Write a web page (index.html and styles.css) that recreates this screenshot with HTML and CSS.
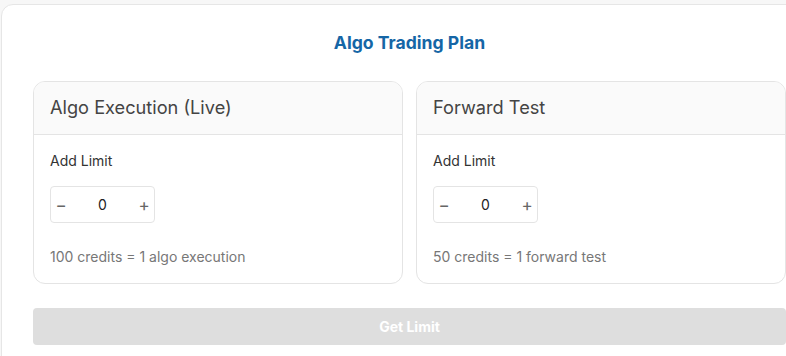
FILE: index.html
```html
<!DOCTYPE html>
<html>
<head>
<meta charset="utf-8">
<link rel="stylesheet" href="styles.css">
</head>
<body>
<div class="page">
  <div class="panel">
    <h2 class="title">Algo Trading Plan</h2>
    <div class="cards">
      <div class="card">
        <div class="card-head">Algo Execution (Live)</div>
        <div class="card-body">
          <div class="label">Add Limit</div>
          <div class="stepper">
            <span class="step">&minus;</span>
            <span class="val">0</span>
            <span class="step">+</span>
          </div>
          <div class="note">100 credits = 1 algo execution</div>
        </div>
      </div>
      <div class="card">
        <div class="card-head">Forward Test</div>
        <div class="card-body">
          <div class="label">Add Limit</div>
          <div class="stepper">
            <span class="step">&minus;</span>
            <span class="val">0</span>
            <span class="step">+</span>
          </div>
          <div class="note">50 credits = 1 forward test</div>
        </div>
      </div>
    </div>
    <button class="cta" disabled>Get Limit</button>
  </div>
</div>
</body>
</html>
```
FILE: styles.css
```css
html, body {
  margin: 0;
  padding: 0;
  background: #f7f7f7;
  overflow: hidden;
  font-family: Inter, "Noto Sans", sans-serif;
}
.page {
  width: 786px;
  height: 356px;
  overflow: hidden;
  padding: 4px 0 0 1px;
  box-sizing: border-box;
}
.panel {
  width: 817px;
  box-sizing: border-box;
  background: #fff;
  border: 1px solid #e6e6e6;
  border-radius: 12px;
  padding: 24px 31px 40px 31px;
}
.title {
  margin: 0 0 24px 0;
  text-align: center;
  font-size: 17.6px;
  font-weight: 700;
  line-height: 28px;
  color: #1566a6;
}
.cards {
  display: grid;
  grid-template-columns: 1fr 1fr;
  gap: 13px;
}
.card {
  border: 1px solid #e4e4e4;
  border-radius: 12px;
  overflow: hidden;
}
.card-head {
  background: #fafafa;
  border-bottom: 1px solid #e4e4e4;
  padding: 15px 16px 16px;
  font-size: 18.2px;
  line-height: 21px;
  color: #444;
}
.card-body {
  padding: 16px 16px 16px;
}
.label {
  font-size: 14px;
  line-height: 20px;
  color: #333;
}
.stepper {
  margin-top: 15px;
  width: 105px;
  height: 37px;
  box-sizing: border-box;
  border: 1px solid #e4e4e4;
  border-radius: 4px;
  display: flex;
  align-items: center;
  justify-content: space-between;
  padding: 0 3px 0 3px;
}
.step {
  width: 14px;
  text-align: center;
  font-size: 17px;
  color: #666;
}
.val {
  font-size: 14px;
  color: #222;
}
.note {
  margin-top: 24px;
  font-size: 14px;
  line-height: 20px;
  color: #777;
}
.cta {
  display: block;
  width: 100%;
  margin-top: 24px;
  height: 37px;
  border: none;
  border-radius: 4px;
  background: #dedede;
  color: #fff;
  font-family: inherit;
  font-size: 14px;
  font-weight: 700;
}
```
